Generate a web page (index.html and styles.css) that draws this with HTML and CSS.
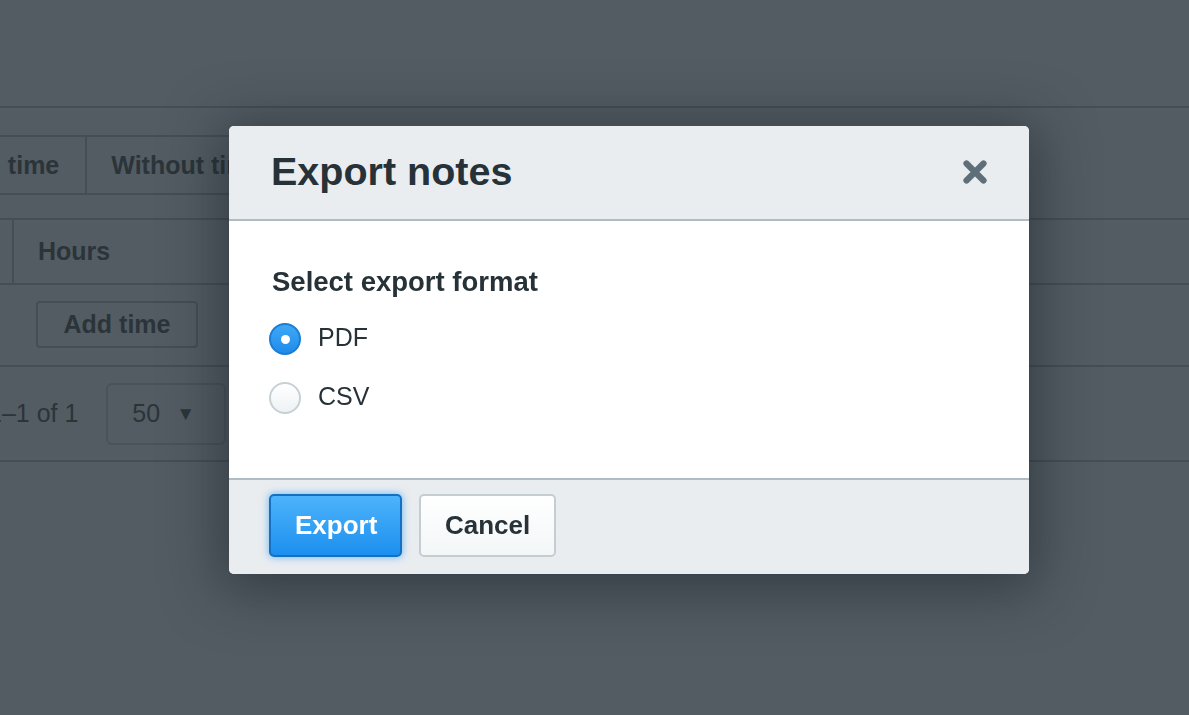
FILE: index.html
```html
<!DOCTYPE html>
<html lang="en">
<head>
<meta charset="utf-8">
<title>Export notes</title>
<link rel="stylesheet" href="styles.css">
</head>
<body>
<div class="page">
  <div class="top"></div>
  <div class="tabs-wrap">
    <div class="tabs">
      <div class="tab tab-first">With time</div>
      <div class="tab">Without time</div>
    </div>
  </div>
  <div class="thead">
    <div class="cell cell-stub"></div>
    <div class="cell cell-hours">Hours</div>
  </div>
  <div class="trow">
    <button class="ghost-btn" type="button">Add time</button>
  </div>
  <div class="pager">
    <span class="pager-count">1–1 of 1</span>
    <span class="pager-select">50 <span class="caret">▼</span></span>
  </div>
</div>

<div class="overlay">
  <div class="modal" role="dialog" aria-labelledby="modal-title">
    <div class="modal-header">
      <h2 class="modal-title" id="modal-title">Export notes</h2>
      <button class="close-btn" type="button" aria-label="Close">
        <svg width="26" height="26" viewBox="0 0 26 26" aria-hidden="true">
          <path d="M4.5 4.5 L21.5 21.5 M21.5 4.5 L4.5 21.5" stroke="#5f6f79" stroke-width="6.2" stroke-linecap="round" fill="none"/>
        </svg>
      </button>
    </div>
    <div class="modal-body">
      <div class="field-label">Select export format</div>
      <label class="option">
        <input type="radio" name="fmt" class="radio" checked>
        <span class="option-text">PDF</span>
      </label>
      <label class="option">
        <input type="radio" name="fmt" class="radio">
        <span class="option-text">CSV</span>
      </label>
    </div>
    <div class="modal-footer">
      <button class="btn btn-primary" type="button">Export</button>
      <button class="btn btn-default" type="button">Cancel</button>
    </div>
  </div>
</div>
</body>
</html>
```

FILE: styles.css
```css
* { box-sizing: border-box; }

html, body {
  margin: 0;
  padding: 0;
  height: 100%;
  overflow: hidden;
}

body {
  font-family: "Liberation Sans", Arial, sans-serif;
  background: #535c63;
  color: #2b3439;
}

.page {
  min-height: 100%;
  background: #535c63;
  color: #2b3439;
}

.top {
  height: 108px;
  border-bottom: 2px solid #454e54;
}

.tabs-wrap {
  padding: 27px 0 23px;
  border-bottom: 2px solid #454e54;
}

.tabs {
  display: flex;
  height: 60px;
  margin-left: -53px;
  width: 520px;
  border-top: 2px solid #454e54;
  border-bottom: 2px solid #454e54;
}

.tab {
  display: flex;
  align-items: center;
  font-size: 25px;
  font-weight: bold;
  color: #2b3439;
  white-space: nowrap;
}

.tab-first {
  padding: 0 26px 0 0;
  border-right: 2px solid #454e54;
}

.tab + .tab {
  padding-left: 24px;
}

.thead {
  display: flex;
  height: 65px;
  border-bottom: 2px solid #454e54;
}

.cell {
  display: flex;
  align-items: center;
  font-size: 25px;
  font-weight: bold;
}

.cell-stub {
  width: 14px;
  border-right: 2px solid #454e54;
}

.cell-hours {
  padding-left: 24px;
}

.trow {
  height: 82px;
  padding: 16px 0 0 36px;
  border-bottom: 2px solid #454e54;
}

.ghost-btn {
  font-family: inherit;
  font-size: 25px;
  font-weight: bold;
  color: #2b3439;
  background: transparent;
  border: 2px solid #454e54;
  border-radius: 4px;
  width: 162px;
  height: 47px;
  padding: 0;
}

.pager {
  height: 95px;
  display: flex;
  align-items: center;
  gap: 28px;
  margin-left: -12px;
  border-bottom: 2px solid #454e54;
  font-size: 25px;
}

.pager-count {
  white-space: nowrap;
}

.pager-select {
  display: inline-flex;
  align-items: center;
  gap: 16px;
  width: 120px;
  height: 62px;
  padding-left: 24px;
  border: 2px solid #4a5359;
  border-radius: 6px;
}

.caret {
  font-size: 19px;
}

/* ---------- modal ---------- */

.overlay {
  position: fixed;
  inset: 0;
  padding: 126px 0 0 229px;
}

.modal {
  width: 800px;
  border-radius: 5px;
  overflow: hidden;
  background: #fff;
  box-shadow: 0 8px 55px 8px rgba(22, 30, 35, 0.5);
  color: #263238;
}

.modal-header {
  display: flex;
  align-items: center;
  justify-content: space-between;
  height: 95px;
  padding: 0 41px 2px 42px;
  background: #e9edf0;
  border-bottom: 2px solid #b0bcc3;
}

.modal-title {
  margin: 0;
  font-size: 39.5px;
  line-height: 45px;
  font-weight: bold;
  color: #263238;
}

.close-btn {
  display: flex;
  padding: 0;
  border: 0;
  background: transparent;
}

.modal-body {
  padding: 43px 43px 64px 40px;
  display: flex;
  flex-direction: column;
  gap: 27px;
  border-bottom: 2px solid #b0bcc3;
}

.field-label {
  padding-left: 3px;
  font-size: 27.5px;
  line-height: 31px;
  font-weight: bold;
  margin-bottom: 1px;
  padding-top: 2px;
}

.field-label + .option {
  margin-top: -2px;
}

.option {
  display: flex;
  align-items: center;
  gap: 17px;
  height: 32px;
}

.radio {
  appearance: none;
  -webkit-appearance: none;
  margin: 0;
  width: 32px;
  height: 32px;
  border-radius: 50%;
  border: 2px solid #c6d0d5;
  background: linear-gradient(#ffffff, #eef2f4);
  position: relative;
}

.radio:checked {
  border-color: #1b7dd3;
  background: linear-gradient(#3ea8f6, #1f8ceb);
}

.radio:checked::after {
  content: "";
  position: absolute;
  left: 50%;
  top: 50%;
  width: 9px;
  height: 9px;
  margin: -4.5px 0 0 -4.5px;
  border-radius: 50%;
  background: #fff;
}

.option-text {
  font-size: 25px;
  line-height: 29px;
  padding-bottom: 4px;
  color: #263238;
}

.modal-footer {
  display: flex;
  gap: 17px;
  height: 94px;
  padding: 14px 40px 0;
  background: #e9edf0;
}

.btn {
  height: 63px;
  padding: 0 24px;
  font-family: inherit;
  font-size: 26px;
  font-weight: bold;
  border-radius: 5px;
  border: 2px solid;
}

.btn-primary {
  width: 133px;
  color: #fff;
  border-color: #1670bf;
  background: linear-gradient(#4db4fb, #1c8fef);
  box-shadow: 0 0 7px 1px rgba(40, 155, 245, 0.55);
}

.btn-default {
  width: 137px;
  color: #263238;
  border-color: #c3cdd2;
  background: linear-gradient(#ffffff, #f3f6f7);
}
```
